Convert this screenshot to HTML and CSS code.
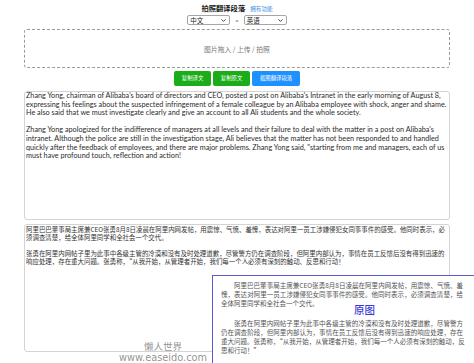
FILE: index.html
```html
<!DOCTYPE html>
<html lang="zh-CN">
<head>
<meta charset="utf-8">
<title>拍照翻译段落</title>
<link rel="stylesheet" href="styles.css">
</head>
<body>
<div class="page">
  <header class="head">
    <h1 class="title">拍照翻译段落</h1>
    <a class="feat">拥有功能</a>
  </header>
  <div class="langs">
    <div class="sel"><span>中文</span><svg class="chev" viewBox="0 0 5 3" width="5" height="3"><path d="M0.5 0.4 L2.5 2.4 L4.5 0.4" fill="none" stroke="#333" stroke-width="0.9"/></svg></div>
    <span class="arrow">=</span>
    <div class="sel"><span>英语</span><svg class="chev" viewBox="0 0 5 3" width="5" height="3"><path d="M0.5 0.4 L2.5 2.4 L4.5 0.4" fill="none" stroke="#333" stroke-width="0.9"/></svg></div>
  </div>
  <div class="drop">图片拖入 / 上传 / 拍照</div>
  <div class="btns">
    <button class="btn green">复制译文</button>
    <button class="btn green">复制原文</button>
    <button class="btn blue">截图翻译段落</button>
  </div>
  <div class="box en">
    <p>Zhang Yong, chairman of Alibaba's board of directors and CEO, posted a post on Alibaba's Intranet in the early morning of August 8, expressing his feelings about the suspected infringement of a female colleague by an Alibaba employee with shock, anger and shame. He also said that we must investigate clearly and give an account to all Ali students and the whole society.</p>
    <p>Zhang Yong apologized for the indifference of managers at all levels and their failure to deal with the matter in a post on Alibaba's intranet. Although the police are still in the investigation stage, Ali believes that the matter has not been responded to and handled quickly after the feedback of employees, and there are major problems. Zhang Yong said, "starting from me and managers, each of us must have profound touch, reflection and action!</p>
  </div>
  <div class="box zh">
    <p>阿里巴巴董事局主席兼CEO张勇8月8日凌晨在阿里内网发帖，用震惊、气愤、羞愧，表达对阿里一员工涉嫌侵犯女同事事件的感受。他同时表示，必须调查清楚，给全体阿里同学和全社会一个交代。</p>
    <p>张勇在阿里内网帖子里为此事中各级主管的冷漠和没有及时处理道歉，尽管警方仍在调查阶段，但阿里内部认为，事情在员工反馈后没有得到迅速的响应处理，存在重大问题。张勇称，“从我开始，从管理者开始，我们每一个人必须有深刻的触动、反思和行动！</p>
  </div>
</div>

<div class="orig">
  <p>
    <span class="ln first">阿里巴巴董事局主席兼CEO张勇8月8日凌晨在阿里内网发帖，用震惊、气愤、羞</span>
    <span class="ln">愧，表达对阿里一员工涉嫌侵犯女同事事件的感受。他同时表示，必须调查清楚，给</span>
    <span class="ln end">全体阿里同学和全社会一个交代。</span>
  </p>
  <p>
    <span class="ln first">张勇在阿里内网帖子里为此事中各级主管的冷漠和没有及时处理道歉，尽管警方</span>
    <span class="ln">仍在调查阶段，但阿里内部认为，事情在员工反馈后没有得到迅速的响应处理，存在</span>
    <span class="ln">重大问题。张勇称，“从我开始，从管理者开始，我们每一个人必须有深刻的触动，反</span>
    <span class="ln end">思和行动！”</span>
  </p>
  <span class="tag">原图</span>
</div>

<div class="mark">
  <span class="cn">懒人世界</span>
  <span class="url">www.easeido.com</span>
</div>
</body>
</html>
```
FILE: styles.css
```css
html, body {
  margin: 0;
  padding: 0;
  overflow: hidden;
  background: #fff;
}
body {
  width: 474px;
  height: 363px;
  position: relative;
  font-family: "Lato", "Noto Sans CJK SC", sans-serif;
  color: #333;
}
.page {
  width: 426px;
  margin: 0 auto;
  padding-top: 3px;
  display: flex;
  flex-direction: column;
}
.head {
  display: flex;
  justify-content: center;
  align-items: baseline;
  height: 10px;
  line-height: 10px;
}
.title {
  margin: 0;
  font-family: "Noto Sans CJK SC", sans-serif;
  font-size: 7.3px;
  font-weight: 700;
  color: #1a1a1a;
}
.feat {
  margin-left: 5px;
  font-family: "Noto Sans CJK SC", sans-serif;
  font-size: 5.6px;
  color: #3a8ee6;
}
.langs {
  display: flex;
  justify-content: center;
  align-items: center;
  margin-top: 2px;
  height: 10px;
}
.sel {
  width: 43px;
  height: 10px;
  box-sizing: border-box;
  border: 1px solid #a6a6a6;
  border-radius: 2px;
  display: flex;
  align-items: center;
  justify-content: space-between;
  padding: 0 3px 0 2px;
  font-family: "Noto Sans CJK SC", sans-serif;
  font-size: 6.5px;
  color: #222;
}
.chev {
  display: block;
}
.arrow {
  margin: 0 5px;
  font-size: 6px;
  color: #777;
}
.drop {
  margin-top: 4px;
  height: 39px;
  box-sizing: border-box;
  border: 1px dashed #9a9a9a;
  border-radius: 3px;
  display: flex;
  align-items: center;
  justify-content: center;
  font-family: "Noto Sans CJK SC", sans-serif;
  font-size: 6.8px;
  color: #777;
}
.btns {
  display: flex;
  justify-content: center;
  gap: 1.5px;
  margin-top: 3px;
}
.btn {
  height: 15px;
  padding: 0 8px;
  border: 0;
  border-radius: 2px;
  color: #fff;
  font-family: "Noto Sans CJK SC", sans-serif;
  font-size: 5.4px;
  line-height: 15px;
}
.green { background: #1aad19; }
.blue { background: #1e90ff; }
.box {
  box-sizing: border-box;
  border: 1px solid #d4d4d4;
  border-radius: 3px;
  padding: 0 0 0 1px;
}
.box p { margin: 0; }
.en {
  margin-top: 5px;
  height: 129px;
  font-size: 7.25px;
  line-height: 8.6px;
  color: #2b2b2b;
}
.en p + p { margin-top: 8.6px; }
.zh {
  margin-top: 4px;
  height: 128px;
  padding-top: 1.4px;
  font-family: "Noto Sans CJK SC", sans-serif;
  font-size: 6.45px;
  line-height: 7.85px;
  color: #333;
}
.zh p + p { margin-top: 7.85px; }
.orig {
  position: absolute;
  left: 212px;
  top: 275px;
  width: 262px;
  height: 88px;
  box-sizing: border-box;
  border: 1px solid #5a5ad4;
  border-right: 0;
  border-bottom: 0;
  background: #fff;
  padding: 5px 0 0 8px;
  font-family: "Noto Sans CJK SC", sans-serif;
  font-size: 6.5px;
  line-height: 9px;
  color: #555;
}
.orig p {
  margin: 0 0 11px;
  width: 242px;
}
.ln {
  display: block;
  white-space: nowrap;
  text-align: justify;
  text-align-last: justify;
}
.ln.first { padding-left: 2em; }
.ln.end { text-align-last: left; }
.tag {
  position: absolute;
  left: 141px;
  top: 28px;
  font-size: 10.5px;
  line-height: 12px;
  color: #3b3bd8;
  font-weight: 500;
}
.mark {
  position: absolute;
  left: 113px;
  top: 341px;
  width: 100px;
  text-align: center;
  line-height: 11px;
  color: rgba(110, 110, 110, 0.75);
}
.mark .cn {
  display: block;
  font-family: "Noto Sans CJK SC", sans-serif;
  font-size: 9.5px;
}
.mark .url {
  display: block;
  font-family: "DejaVu Sans", sans-serif;
  font-size: 9.8px;
}
```
